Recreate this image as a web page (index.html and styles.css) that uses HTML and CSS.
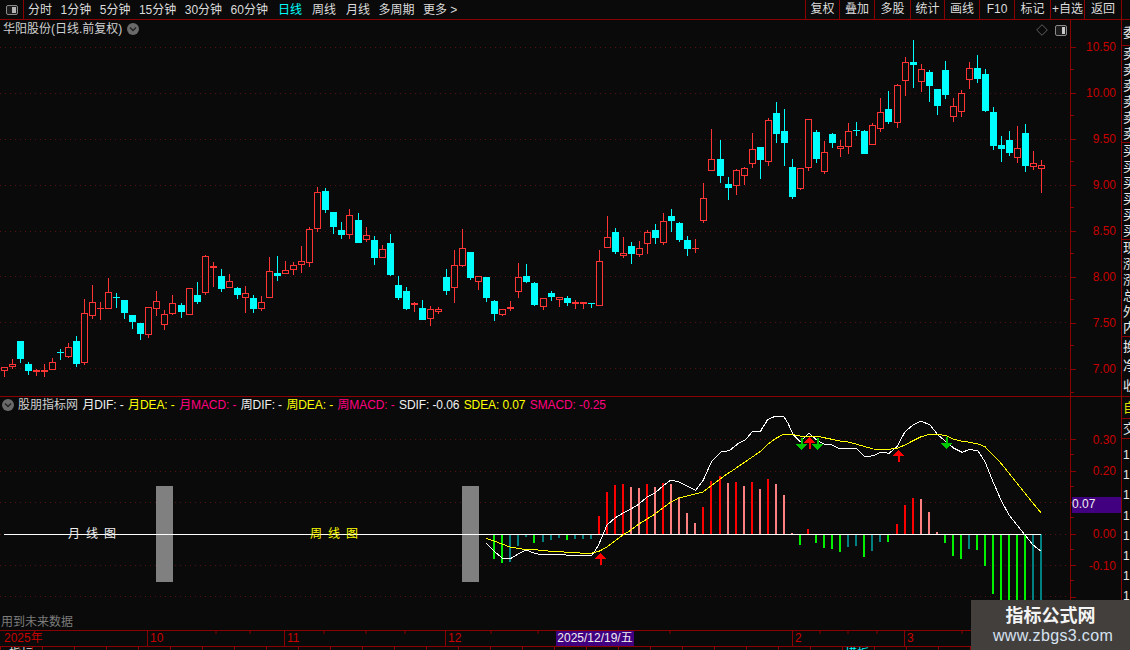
FILE: index.html
```html
<!DOCTYPE html>
<html lang="zh-CN">
<head>
<meta charset="utf-8">
<title>华阳股份 日线</title>
<link rel="stylesheet" href="styles.css">
</head>
<body>
<div class="app">
  <header class="toolbar">
    <div class="toolbar-left">
      <div class="panel-btn">
        <svg class="panel-icon" viewBox="0 0 12 10"><rect x=".5" y=".5" width="11" height="9" rx="1.5" fill="#1c1c1c" stroke="#8a8a8a"/><rect x="6" y="2" width="4" height="6" fill="#b4b4b4"/></svg>
      </div>
      <nav class="tabs">
        <span>分时</span><span>1分钟</span><span>5分钟</span><span>15分钟</span><span>30分钟</span><span>60分钟</span>
        <span class="tab-line tab-active">日线</span><span class="tab-line">周线</span><span class="tab-line">月线</span><span>多周期</span><span>更多 &gt;</span>
      </nav>
    </div>
    <div class="actions">
      <span>复权</span><span>叠加</span><span>多股</span><span>统计</span><span>画线</span><span>F10</span><span>标记</span><span>+自选</span><span>返回</span>
    </div>
  </header>

  <div class="workspace">
    <div class="charts">
      <section class="pane pane-price">
        <div class="plot">
          <svg id="price" class="plot-svg" viewBox="0 20 1070 376"></svg>
          <div class="plot-title">
            <span>华阳股份(日线.前复权)</span>
            <svg class="chevron" viewBox="0 0 12 12"><circle cx="6" cy="6" r="6" fill="#6a6a6a"/><path d="M3 4.5 6 7.5 9 4.5" fill="none" stroke="#222" stroke-width="1.4"/></svg>
          </div>
          <div class="plot-tools">
            <svg class="diamond" viewBox="0 0 12 12"><path d="M6 .7 11.3 6 6 11.3 .7 6Z" fill="none" stroke="#5e5e5e"/></svg>
            <svg class="panel-icon-lg" viewBox="0 0 12 11"><rect x=".5" y=".5" width="11" height="10" rx="1.5" fill="#1c1c1c" stroke="#8a8a8a"/><rect x="7" y="2" width="3" height="7" fill="#c8c8c8"/></svg>
          </div>
        </div>
        <div class="axis axis-price">
          <div>10.50</div><div>10.00</div><div>9.50</div><div>9.00</div><div>8.50</div><div>8.00</div><div>7.50</div><div>7.00</div>
        </div>
      </section>

      <section class="pane pane-macd">
        <div class="plot">
          <svg id="macd" class="plot-svg" viewBox="0 397 1070 233"></svg>
          <div class="legend">
            <svg class="chevron" viewBox="0 0 12 12"><circle cx="6" cy="6" r="6" fill="#6a6a6a"/><path d="M3 4.5 6 7.5 9 4.5" fill="none" stroke="#222" stroke-width="1.4"/></svg>
            <span class="legend-name">股朋指标网</span>
            <span>月DIF: -</span><span class="c-y">月DEA: -</span><span class="c-p">月MACD: -</span>
            <span>周DIF: -</span><span class="c-y">周DEA: -</span><span class="c-p">周MACD: -</span>
            <span>SDIF: -0.06</span><span class="c-y">SDEA: 0.07</span><span class="c-p">SMACD: -0.25</span>
          </div>
          <span class="zone-label zone-month">月 线 图</span>
          <span class="zone-label zone-week">周 线 图</span>
          <span class="notice">用到未来数据</span>
        </div>
        <div class="axis axis-macd">
          <div>0.30</div><div>0.20</div><div>0.10</div><div>0.00</div><div>-0.10</div><div></div>
          <span class="axis-flag">0.07</span>
        </div>
      </section>

      <div class="time-axis">
        <span class="t t1">2025年</span><span class="t t2">10</span><span class="t t3">11</span><span class="t t4">12</span><span class="t t5">2</span><span class="t t6">3</span>
        <svg class="time-ticks" viewBox="0 0 1122 4"><path d="M216 0v3M250 0v3M324 0v3M366 0v3M405 0v3M491 0v3M538 0v3M670 0v3M820 0v3M848 0v3M877 0v3M962 0v3" stroke="#8b0000" fill="none"/></svg>
        <span class="cursor-date">2025/12/19/五</span>
      </div>
    </div>

    <aside class="strip">
      <div class="strip-sec s1">委</div>
      <div class="strip-sec s2"><span>卖</span><span>卖</span><span>卖</span><span>卖</span><span>卖</span><span>卖</span></div>
      <div class="strip-sec s2"><span>买</span><span>买</span><span>买</span><span>买</span><span>买</span><span>买</span></div>
      <div class="strip-sec s2"><span>现</span><span>涨</span><span>涨</span><span>总</span><span>外</span><span>内</span></div>
      <div class="strip-sec s3"><span>换</span><span>净</span><span>收</span></div>
      <div class="strip-sec s4">自</div>
      <div class="strip-sec s5">交</div>
      <div class="strip-sec s6"><span>1</span><span>1</span><span>1</span><span>1</span><span>1</span><span>1</span><span>1</span><span>1</span><span>1</span><span>1</span></div>
    </aside>
  </div>

  <footer class="bottom-tabs"><span class="bt-first">指标</span><span class="bt-active">模板</span></footer>

  <div class="watermark">
    <strong>指标公式网</strong>
    <span>www.zbgs3.com</span>
  </div>
</div>
<script src="chart.js"></script>
</body>
</html>
```
FILE: styles.css
```css
* { box-sizing: border-box; }
html, body { margin: 0; padding: 0; }
body {
  width: 1130px;
  height: 650px;
  overflow: hidden;
  background: #0a0a0a;
  color: #dcdcdc;
  font: 12px/14px "Liberation Sans", "Noto Sans CJK SC", sans-serif;
}
.app { position: relative; width: 1130px; height: 650px; display: flex; flex-direction: column; overflow: hidden; }

.toolbar { flex: 0 0 20px; display: flex; justify-content: space-between; border-bottom: 1px solid #8b0000; }
.toolbar-left { display: flex; align-items: center; }
.panel-btn { width: 24px; height: 19px; border-right: 1px solid #8b0000; display: flex; align-items: center; justify-content: center; }
.panel-icon { width: 12px; height: 10px; }
.tabs { display: flex; gap: 8.5px; margin-left: 4px; }
.tab-line { margin-left: 1.5px; }
.tab-active { color: #00ffff; }
.actions { display: grid; grid-template-columns: 34px 35px 36px 34px 35px 35px 36px 34px 37px; margin-right: 8px; border-right: 1px solid #8b0000; }
.actions span { border-left: 1px solid #8b0000; text-align: center; line-height: 19px; white-space: nowrap; }

.workspace { flex: 0 0 627px; display: flex; }
.charts { flex: 0 0 1122px; display: flex; flex-direction: column; }
.pane { display: flex; border-bottom: 1px solid #8b0000; }
.pane-price { flex: 0 0 377px; }
.pane-macd { flex: 0 0 234px; }
.plot { position: relative; flex: 0 0 1071px; border-right: 1px solid #8b0000; }
.plot-svg { position: absolute; left: 0; top: 0; width: 1070px; height: 100%; display: block; }

.plot-title { position: absolute; left: 3px; top: 2px; display: flex; align-items: center; gap: 5px; color: #d0d0d0; }
.chevron { width: 12px; height: 12px; flex: none; }
.plot-tools { position: absolute; right: 3px; top: 4px; display: flex; align-items: center; gap: 7px; }
.diamond { width: 12px; height: 12px; }
.panel-icon-lg { width: 12px; height: 11px; }

.legend { position: absolute; left: 2px; top: 1px; display: flex; align-items: center; gap: 4.4px; letter-spacing: -.1px; white-space: nowrap; color: #f0f0f0; }
.legend .legend-name { margin-left: -.4px; letter-spacing: 0; color: #d0d0d0; }
.c-y { color: #ffff00; }
.c-p { color: #ff0080; }
.zone-label { position: absolute; top: 130px; word-spacing: 2.7px; white-space: nowrap; }
.zone-month { left: 68px; color: #f0f0f0; }
.zone-week { left: 310px; color: #ffff00; }
.notice { position: absolute; left: 1px; top: 218px; color: #7c7c7c; }

.axis { position: relative; flex: 0 0 51px; border-right: 1px solid #8b0000; color: #c80000; text-align: right; padding-right: 5px; }
.axis > div { position: relative; }
.axis > div::before { content: ""; position: absolute; left: 0; top: 50%; width: 5px; height: 1px; background: #8b0000; }
.axis > div::after { content: ""; position: absolute; left: 0; bottom: 0; width: 3px; height: 1px; background: #8b0000; }
.axis-price { padding-top: 4px; }
.axis-price > div { height: 46.07px; line-height: 46px; }
.axis-macd { padding-top: 26.5px; }
.axis-macd > div { height: 31.5px; line-height: 32px; }
.axis-flag { position: absolute; left: 1px; right: 0; top: 100px; height: 16px; line-height: 15px; background: #400080; color: #f0f0f0; text-align: left; }

.time-axis { position: relative; flex: 0 0 16px; border-bottom: 1px solid #8b0000; display: grid; grid-template-columns: 147px 137px 161px 347px 112px 218px; }
.t { color: #c80000; padding-left: 2px; border-left: 1px solid #8b0000; line-height: 15px; }
.t1 { border-left: 0; padding-left: 4px; }
.time-ticks { position: absolute; left: 0; top: 0; width: 1122px; height: 4px; }
.cursor-date { position: absolute; left: 556px; top: 0; width: 78px; height: 15px; line-height: 15px; text-align: center; background: #400080; color: #f0f0f0; white-space: nowrap; }

.strip { flex: 0 0 8px; overflow: hidden; display: flex; flex-direction: column; color: #e8e8e8; font-size: 13px; }
.strip-sec { display: flex; flex-direction: column; justify-content: space-around; border-bottom: 1px solid #8b0000; padding-left: 1px; white-space: nowrap; }
.s1 { flex: 0 0 26px; }
.s2 { flex: 0 0 97px; }
.s3 { flex: 0 0 60px; }
.s4 { flex: 0 0 22px; color: #dcdc00; }
.s5 { flex: 0 0 20px; }
.s6 { flex: 1 1 auto; border-bottom: 0; padding-top: 6px; font-size: 12px; }

.bottom-tabs { flex: 0 0 3px; overflow: hidden; display: flex; padding-left: 9px; line-height: 14px; background: repeating-linear-gradient(to right, #8b0000 0 1px, transparent 1px 32px) 42px 0; }
.bt-active { margin-left: 812px; color: #00ffff; }

.watermark { position: absolute; right: 0; bottom: 0; width: 159px; height: 50px; padding-bottom: 2px; background: #433f3d; display: flex; flex-direction: column; align-items: center; justify-content: center; gap: 2px; color: #f4f4f4; }
.watermark strong { font-size: 18px; line-height: 22px; font-family: "Noto Sans CJK SC", sans-serif; }
.watermark span { padding-left: 5px; font-size: 16px; line-height: 18px; letter-spacing: .35px; color: #d6e2f0; }
```
FILE: chart.js
```js
(function () {
  var NS = 'http://www.w3.org/2000/svg';
  function add(svg, tag, attrs) {
    var n = document.createElementNS(NS, tag);
    for (var k in attrs) n.setAttribute(k, attrs[k]);
    svg.appendChild(n);
    return n;
  }
  function rect(svg, x, y, w, h, fill) {
    add(svg, 'rect', { x: x, y: y, width: w, height: h, fill: fill, 'shape-rendering': 'crispEdges' });
  }
  function grid(svg, ys) {
    ys.forEach(function (y) {
      add(svg, 'line', { x1: 0, x2: 1070, y1: y + .5, y2: y + .5, stroke: '#551010', 'stroke-dasharray': '1 4', 'shape-rendering': 'crispEdges' });
    });
  }

  /* Price pane: x, wick top, body top, body bottom, wick bottom, rising? (measured in 3x units from the origin) */
  var segments = [
    [0, 220, [[13,440,442,452,470,1],[37,418,431,442,446,1],[61,364,364,416,428,0],[85,427,433,452,464,0],[109,447,451,455,468,1],[133,433,449,457,470,1],[157,415,425,449,449,1],[181,388,396,398,420,0],[205,370,382,410,413,1],[229,349,364,431,440,0],[253,238,280,430,434,1],[277,196,247,287,296,1],[301,247,265,268,299,1],[325,175,217,268,268,1],[349,220,232,235,263,0],[373,241,241,278,296,0],[397,286,286,305,326,0],[421,310,310,341,359,0],[445,262,262,344,353,1],[469,214,244,268,287,1],[493,271,283,314,329,1],[517,226,250,281,285,1],[544,250,256,275,293,0],[568,205,205,284,284,1],[592,187,226,245,251,0],[616,106,109,220,224,1],[640,127,139,143,200,1],[664,148,169,206,215,0],[688,163,184,203,203,1],[712,202,205,224,236,0],[736,199,220,235,278,1],[760,226,235,266,278,0],[784,229,247,266,272,1],[808,112,154,235,235,1],[832,109,160,167,182,0],[856,124,151,163,163,1],[880,127,136,151,166,1],[904,79,124,136,160,1],[928,22,28,128,140,1]]],
    [300, 175, [[52,36,52,163,172,1],[76,39,48,105,114,0]]],
    [330, 180, [[10,97,97,140,161,0],[34,126,150,165,176,0],[58,87,106,164,176,1],[85,99,121,188,188,0],[109,142,166,179,185,1],[133,168,181,233,254,0],[157,196,208,233,233,1],[181,163,190,285,287,0],[205,289,316,353,359,0],[229,322,334,386,389,0],[253,366,370,376,395,1],[277,361,385,419,419,0],[301,379,388,416,437,1],[325,381,388,395,401,1],[349,268,292,332,344,0],[373,211,256,323,368,1],[397,148,205,257,260,1],[421,217,217,293,299,0],[445,289,289,305,329,1],[469,292,292,353,365,0],[493,361,364,401,422,0],[517,388,388,404,407,1],[541,364,382,388,392,1],[565,250,292,335,353,1],[589,253,289,305,308,0],[613,307,310,374,377,0],[640,355,355,380,389,1],[664,334,340,350,362,0],[688,352,352,361,380,1],[712,349,355,368,377,0],[736,361,367,371,386,1],[760,367,367,371,386,1],[784,370,370,371,383,0],[808,211,244,377,377,1],[832,109,172,203,203,1],[856,145,157,216,221,0],[880,172,220,227,233,1],[904,187,199,222,251,0],[928,184,205,224,230,1],[952,151,157,193,221,1],[976,133,151,173,191,0],[1000,100,124,188,194,1],[1024,88,109,122,155,0],[1048,127,130,179,185,0],[1072,169,181,206,227,0],[1096,178,203,208,218,1],[1120,10,55,124,128,1]]],
    [700, 30, [[34,298,388,422,422,1],[61,331,388,437,458,0],[85,442,463,473,509,0],[109,418,421,467,494,1],[133,412,415,437,464,1],[157,310,358,401,413,1],[181,352,352,389,446,0],[205,265,271,395,407,1],[229,217,250,311,338,0],[253,238,304,338,407,0],[277,388,412,500,506,0],[301,415,415,476,479,1],[325,268,268,415,422,1],[349,301,307,386,398,0],[373,334,367,425,431,1],[397,310,313,338,353,0],[421,331,349,356,380,1],[445,280,304,350,371,1],[469,277,300,303,318,0],[493,301,304,371,371,0],[517,280,286,344,344,1],[541,205,247,296,305,1],[565,184,238,275,281,0],[592,163,166,278,293,1],[616,82,97,152,197,1],[640,31,97,104,173,0],[664,103,118,155,185,1],[688,121,127,167,215,0],[712,178,178,227,254,0],[736,94,121,194,206,0],[760,205,229,260,275,1],[784,181,190,245,260,1],[808,97,115,149,176,1],[832,76,115,146,158,0],[856,118,133,242,245,0],[880,232,247,347,359,0],[904,319,346,356,395,0],[928,304,331,368,379,0],[952,289,355,383,398,1],[976,283,310,407,425,0],[1000,364,398,410,419,1],[1024,391,406,418,488,1]]]
  ];

  var price = document.getElementById('price');
  grid(price, [47, 93, 139, 185, 231, 276, 322, 368]);
  var UP = '#ff3434', DOWN = '#00ffff';
  segments.forEach(function (seg) {
    seg[2].forEach(function (c) {
      var x = Math.floor(c[0] / 3 + seg[0]);
      function Y(v) { return Math.round(v / 3 + seg[1]); }
      var wt = Y(c[1]), bt = Y(c[2]), bb = Y(c[3]), wb = Y(c[4]);
      var col = c[5] ? UP : DOWN;
      if (bb <= bt) bb = bt + 1;
      rect(price, x, wt, 1, Math.max(bt - wt, 0), col);
      rect(price, x, bb, 1, Math.max(wb - bb, 0), col);
      if (c[5] && bb - bt > 2) {
        add(price, 'rect', { x: x - 2.5, y: bt + .5, width: 6, height: bb - bt - 1, fill: '#0a0a0a', stroke: col, 'shape-rendering': 'crispEdges' });
      } else {
        rect(price, x - 3, bt, 7, bb - bt, col);
      }
    });
  });

  /* Indicator pane */
  var macd = document.getElementById('macd');
  grid(macd, [439, 471, 502, 534, 565, 596]);
  rect(macd, 156, 486, 17, 96, '#808080');
  rect(macd, 462, 486, 17, 96, '#808080');

  var G = '#00f000', T = '#008080', R = '#ff0000', P = '#ff8080';
  /* x, end-of-bar y, colour (3x units from origin) */
  var barsA = [[72,267,G],[96,278,G],[120,275,T],[144,228,T],[168,201,T],[192,219,G],[219,216,T],[243,210,T],[267,204,T],[291,210,G],[315,207,T],[339,207,T],[363,207,T],[387,138,R],[411,66,R],[435,45,R],[459,42,R],[483,51,P],[507,54,P],[531,42,R],[555,51,P],[579,39,R],[603,42,P],[627,81,P],[651,129,P],[675,159,P],[699,111,R],[723,33,R],[750,18,R]];
  var barsB = [[0,267,P],[24,237,R],[48,252,P],[72,285,P],[96,399,P],[120,435,G],[144,387,R],[168,429,G],[192,444,G],[216,447,G],[240,456,G],[264,441,T],[288,438,T],[312,471,G],[336,453,T],[360,426,T],[384,426,G],[411,372,R],[435,315,R],[459,294,R],[483,297,P],[507,336,P],[531,396,P],[555,429,G],[579,468,G],[603,477,G],[627,447,T],[651,450,G],[675,498,G],[699,582,G],[723,640,G],[747,640,G],[771,640,G],[795,640,G],[819,640,T],[843,640,T]];
  var barsC = [[774,39,P],[798,36,R],[822,48,P],[846,36,R]];
  function bars(list, ox, oy) {
    list.forEach(function (b) {
      var x = Math.round(b[0] / 3 + ox) - 1, y = Math.round(b[1] / 3 + oy), z = 534;
      if (y < z) rect(macd, x, y, 2, z - y, b[2]);
      else rect(macd, x, z, 2, y - z, b[2]);
    });
  }
  bars(barsA, 470, 470);
  bars(barsC, 470, 470);
  bars(barsB, 760, 400);
  rect(macd, 4, 534, 1037, 1, '#ffffff');

  function conv(list, ox, oy) {
    return list.map(function (p) { return (p[0] / 3 + ox).toFixed(1) + ',' + (p[1] / 3 + oy).toFixed(1); });
  }
  var white = conv([[48,219],[72,243],[96,264],[120,267],[144,252],[168,240],[192,249],[216,255],[240,252],[264,252],[288,255],[312,255],[336,255],[363,258],[375,243],[387,222],[411,165],[435,144],[459,129],[483,117],[507,102],[531,81],[555,69],[579,48],[603,30],[627,36],[651,48],[675,60]], 470, 470)
    .concat(conv([[18,240],[40,210],[66,152],[94,126],[118,122],[148,98],[166,90],[186,66],[212,64],[232,30]], 690, 410))
    .concat(conv([[0,95],[24,58],[48,48],[72,50],[84,70],[100,105],[120,125],[147,100],[170,120],[192,132],[216,135],[240,147],[264,145],[288,145],[315,170],[340,167],[363,157],[387,160],[411,140],[435,95],[459,75],[483,63],[510,75],[534,105],[558,125],[582,145],[606,157],[630,148],[654,153],[675,185],[699,245],[723,300],[747,345],[771,375],[795,405],[819,435],[843,453]], 760, 400));
  var yellow = conv([[48,205],[72,213],[96,222],[120,231],[144,235],[168,239],[192,239],[216,241],[240,244],[264,244],[288,247],[312,247],[336,250],[363,250],[387,244],[411,231],[435,213],[459,195],[483,180],[507,162],[531,147],[555,132],[579,114],[603,96],[627,84],[651,78],[675,72],[699,66],[723,48],[747,30],[771,12],[790,0]], 470, 470)
    .concat(conv([[0,155],[24,132],[48,115],[72,102],[96,103],[120,108],[144,108],[170,108],[192,113],[216,118],[240,123],[264,126],[288,132],[315,140],[340,147],[363,148],[387,148],[411,145],[435,135],[459,122],[483,110],[510,103],[534,103],[558,107],[582,118],[606,124],[630,127],[654,132],[675,140],[699,165],[723,190],[747,220],[771,250],[795,280],[819,310],[843,338]], 760, 400));
  add(macd, 'polyline', { points: white.join(' '), fill: 'none', stroke: '#ffffff', 'shape-rendering': 'crispEdges' });
  add(macd, 'polyline', { points: yellow.join(' '), fill: 'none', stroke: '#ffff00', 'shape-rendering': 'crispEdges' });

  function up(x, y) {
    add(macd, 'path', { d: 'M' + x + ' ' + y + 'l5.5 6.5h-4.5v6h-2v-6h-4.5z', fill: '#ff0000', 'shape-rendering': 'crispEdges' });
  }
  function down(x, y) {
    add(macd, 'path', { d: 'M' + (x - 1) + ' ' + y + 'h2v6h4.5l-5.5 6.5l-5.5 -6.5h4.5z', fill: '#00c800', 'shape-rendering': 'crispEdges' });
  }
  up(600.5, 552.5); up(809.5, 436.5); up(898.5, 449.5);
  down(801.5, 438); down(817.5, 438); down(946.5, 437);
})();
```
